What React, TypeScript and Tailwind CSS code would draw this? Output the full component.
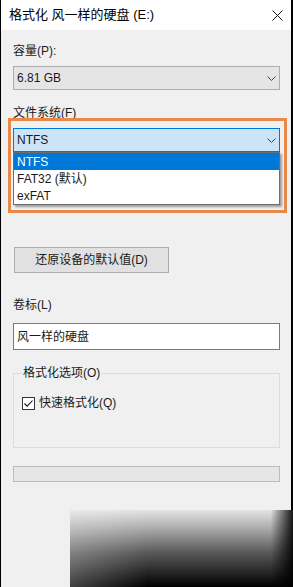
import React from "react";

function CloseIcon() {
  return (
    <svg width="11" height="11" viewBox="0 0 11 11">
      <path d="M0.5 0.5 L10.5 10.5 M10.5 0.5 L0.5 10.5" stroke="#111" strokeWidth="1" fill="none" />
    </svg>
  );
}

function Chevron() {
  return (
    <svg width="9" height="5" viewBox="0 0 9 5">
      <path d="M0.5 0.5 L4.5 4.5 L8.5 0.5" stroke="#444" strokeWidth="1" fill="none" />
    </svg>
  );
}

export default function App() {
  return (
    <div className="relative w-[293px] h-[587px] flex flex-col bg-[#f0f0f0] border-l border-black overflow-hidden font-['Liberation_Sans','Noto_Sans_CJK_SC',sans-serif] text-[12px] text-[#1a1a1a]">
      <div className="h-[510px] flex flex-col border-r-2 border-black">
        <div className="h-[30px] shrink-0 bg-white flex items-center justify-between pl-[8px] pr-[8px] text-[13px] text-black">
          <span>格式化 风一样的硬盘 (E:)</span>
          <CloseIcon />
        </div>

        <div className="flex flex-col pl-[12px] pr-[11px]">
          <div className="mt-[13px] leading-4">容量(P):</div>
          <div className="mt-[7px] h-[24px] flex items-center justify-between bg-[#e5e5e5] border border-[#adadad] pl-[3px] pr-[3px]">
            <span>6.81 GB</span>
            <Chevron />
          </div>

          <div className="mt-[15px] leading-4">文件系统(F)</div>
          <div className="relative mt-[7px] h-[24px] flex items-center justify-between bg-[#cce4f7] border border-[#0078d7] pl-[3px] pr-[3px]">
            <span>NTFS</span>
            <Chevron />
            <div className="absolute left-[-1px] right-[-1px] top-[23px] z-10 flex flex-col bg-white border border-[#6e6e6e] shadow-[2px_2px_2px_rgba(0,0,0,0.35)]">
              <div className="h-[17px] flex items-center pl-[3px] bg-[#0078d7] text-white">NTFS</div>
              <div className="h-[17px] flex items-center pl-[3px]">FAT32 (默认)</div>
              <div className="h-[17px] flex items-center pl-[3px]">exFAT</div>
            </div>
          </div>

          <button className="mt-[95px] ml-[1px] w-[155px] h-[26px] flex items-center justify-center bg-[#e1e1e1] border border-[#adadad] text-[12px]">
            还原设备的默认值(D)
          </button>

          <div className="mt-[24px] leading-4">卷标(L)</div>
          <div className="mt-[10px] h-[27px] flex items-center bg-white border border-[#7a7a7a] pl-[3px]">
            风一样的硬盘
          </div>

          <fieldset className="mt-[15px] h-[83px] border border-[#dcdcdc] px-[8px]">
            <legend className="px-[1px] leading-4">格式化选项(O)</legend>
            <label className="mt-[14px] flex items-center gap-[4px] leading-4">
              <span className="w-[13px] h-[13px] flex items-center justify-center bg-white border border-[#333]">
                <svg width="11" height="11" viewBox="0 0 11 11">
                  <path d="M1.5 5.5 L4.2 8.2 L9.5 2.5" stroke="#111" strokeWidth="1.1" fill="none" />
                </svg>
              </span>
              快速格式化(Q)
            </label>
          </fieldset>

          <div className="mt-[18px] h-[16px] bg-[#e6e6e6] border border-[#bcbcbc]" />
        </div>
      </div>

      <div className="flex-1 flex">
        <div className="w-[69px]" />
        <div className="flex-1 bg-[linear-gradient(to_left,rgba(0,0,0,0.9),rgba(0,0,0,0)_10%),linear-gradient(to_right,rgba(255,255,255,0.25),rgba(255,255,255,0)_35%),linear-gradient(to_bottom,#e4e4e4,#a8a8a8_25%,#5a5a5a_55%,#141414_90%,#000)]" />
      </div>

      <div className="absolute left-[7px] top-[118px] w-[279px] h-[95px] border-[3px] border-[#e8894a] pointer-events-none" />
    </div>
  );
}
